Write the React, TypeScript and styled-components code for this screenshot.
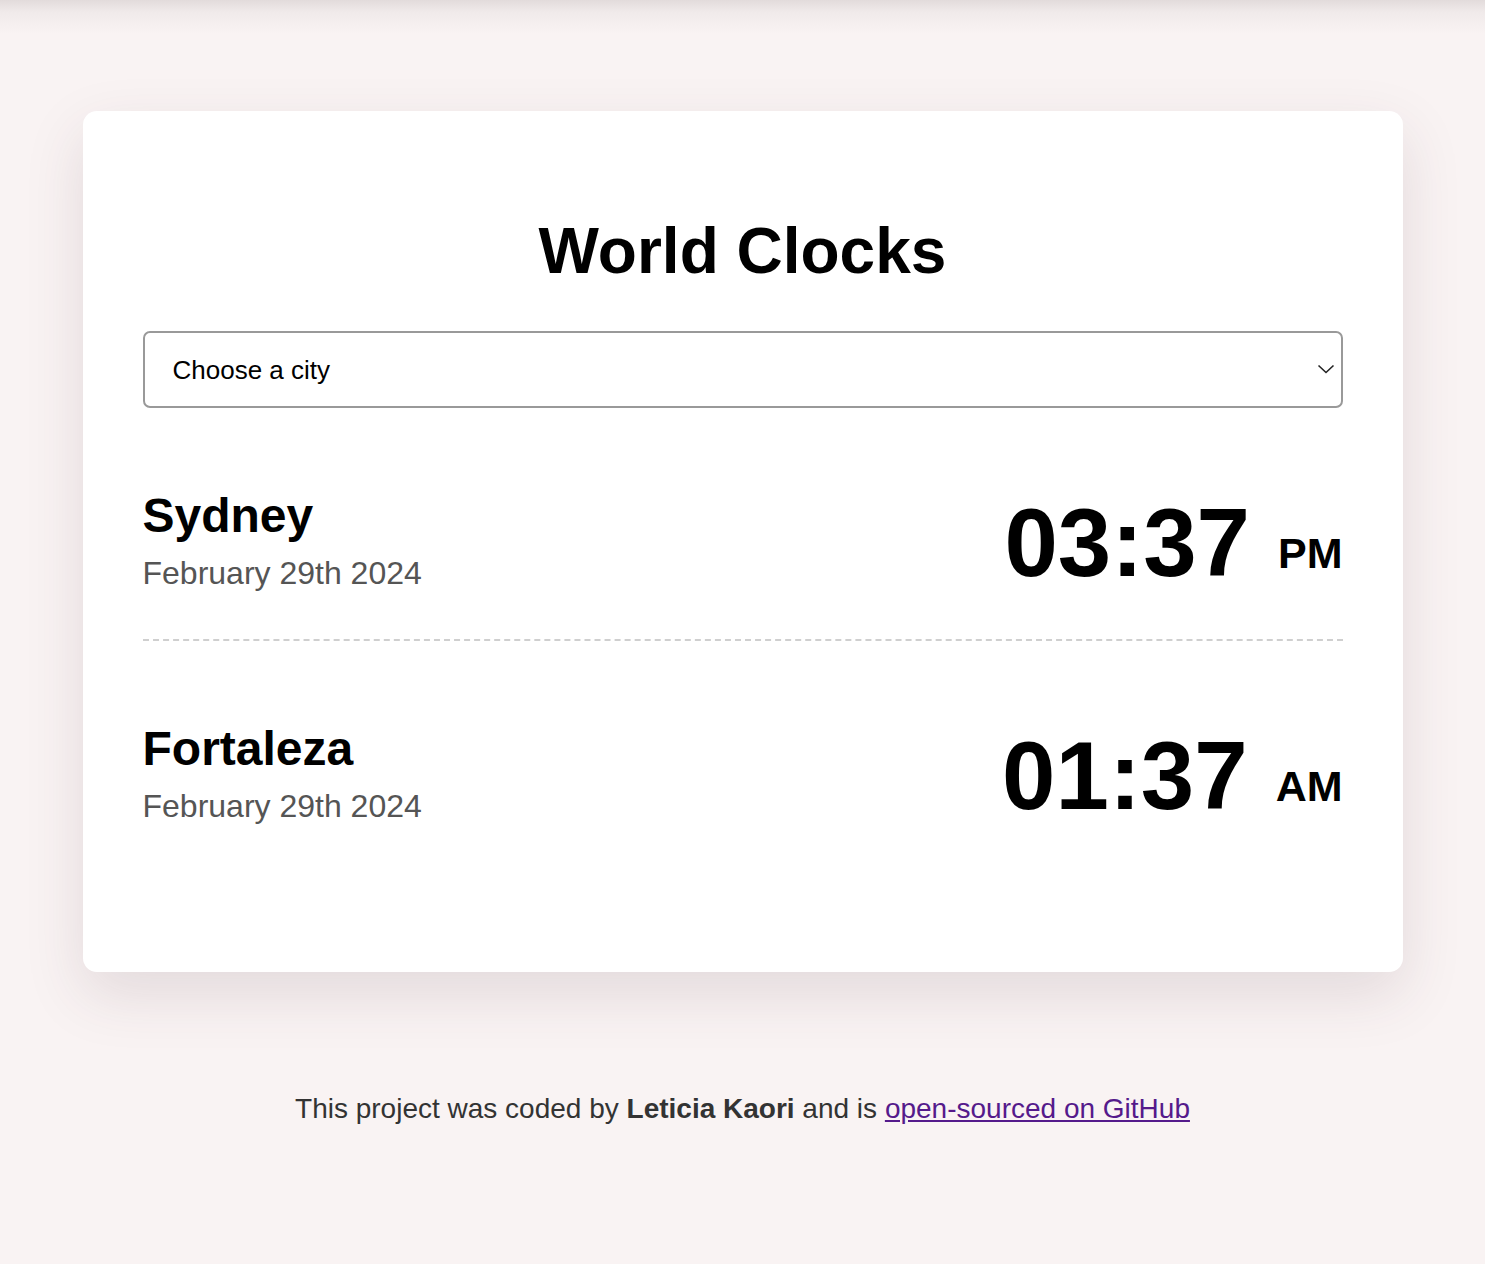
import React, { FC } from 'react'
import styled, { createGlobalStyle } from 'styled-components'

const GlobalStyle = createGlobalStyle`
  html, body {
    margin: 0;
    padding: 0;
  }
  body {
    background: linear-gradient(to bottom, #e2dbdb 0px, #f0eaea 12px, #f9f3f3 34px) no-repeat, #f9f3f3;
    font-family: "Liberation Sans", Arial, Helvetica, sans-serif;
    color: #000;
    min-height: 1264px;
  }
`

const Page = styled.div`
  padding: 111px 0 0;
`

const Card = styled.main`
  max-width: 1200px;
  margin: 0 auto;
  padding: 60px;
  background-color: #fff;
  border-radius: 14px;
  box-shadow: 0 22px 60px rgba(80, 50, 60, 0.13);
`

const Title = styled.h1`
  font-size: 64px;
  font-weight: bold;
  text-align: center;
  margin: 43px 0;
`

const SelectWrap = styled.div`
  position: relative;
`

const CitySelect = styled.select`
  display: block;
  width: 100%;
  height: 77px;
  box-sizing: border-box;
  padding: 0 28px;
  font-family: "Liberation Sans", Arial, Helvetica, sans-serif;
  font-size: 26px;
  color: #000;
  background: #fff;
  border: 2px solid #999;
  border-radius: 7px;
  appearance: none;
  -webkit-appearance: none;
  outline: none;
`

const Chevron = styled.svg`
  position: absolute;
  right: 8px;
  top: 33px;
  pointer-events: none;
`

const Row = styled.div<{ $last?: boolean }>`
  display: flex;
  justify-content: space-between;
  align-items: flex-start;
  padding: 40px 0 41px;
  margin: 40px 0;
  border-bottom: ${({ $last }) => ($last ? 'none' : '2px dashed #cfcfcf')};
`

const CityInfo = styled.div`
  display: flex;
  flex-direction: column;
`

const CityName = styled.h2`
  font-size: 48px;
  font-weight: bold;
  margin: 0;
`

const CityDate = styled.p`
  font-size: 32px;
  color: #555;
  margin: 12px 0 0;
`

const Time = styled.div`
  font-size: 96px;
  font-weight: bold;
  white-space: nowrap;
`

const Meridiem = styled.span`
  font-size: 43px;
  margin-left: 28px;
  vertical-align: 8px;
`

const Footer = styled.footer`
  padding-top: 121px;
  text-align: center;
  font-size: 28px;
  color: #333;
`

const Link = styled.a`
  color: #551a8b;
`

type ClockProps = {
  city: string
  date: string
  time: string
  meridiem: string
  last?: boolean
}

const Clock: FC<ClockProps> = ({ city, date, time, meridiem, last }) => (
  <Row $last={last}>
    <CityInfo>
      <CityName>{city}</CityName>
      <CityDate>{date}</CityDate>
    </CityInfo>
    <Time>
      {time}
      <Meridiem>{meridiem}</Meridiem>
    </Time>
  </Row>
)

const clocks = [
  { city: 'Sydney', date: 'February 29th 2024', time: '03:37', meridiem: 'PM' },
  { city: 'Fortaleza', date: 'February 29th 2024', time: '01:37', meridiem: 'AM' },
]

export default function App() {
  return (
    <Page>
      <GlobalStyle />
      <Card>
        <Title>World Clocks</Title>
        <SelectWrap>
          <CitySelect defaultValue="">
            <option value="">Choose a city</option>
            <option value="Europe/London">London</option>
            <option value="Asia/Tokyo">Tokyo</option>
            <option value="America/New_York">New York</option>
          </CitySelect>
          <Chevron width="18" height="10" viewBox="0 0 18 10">
            <path d="M1.5 1.5 L9 8.5 L16.5 1.5" fill="none" stroke="#222" strokeWidth="1.6" />
          </Chevron>
        </SelectWrap>
        {clocks.map((clock, index) => (
          <Clock key={clock.city} {...clock} last={index === clocks.length - 1} />
        ))}
      </Card>
      <Footer>
        This project was coded by <strong>Leticia Kaori</strong> and is{' '}
        <Link href="#">open-sourced on GitHub</Link>
      </Footer>
    </Page>
  )
}
